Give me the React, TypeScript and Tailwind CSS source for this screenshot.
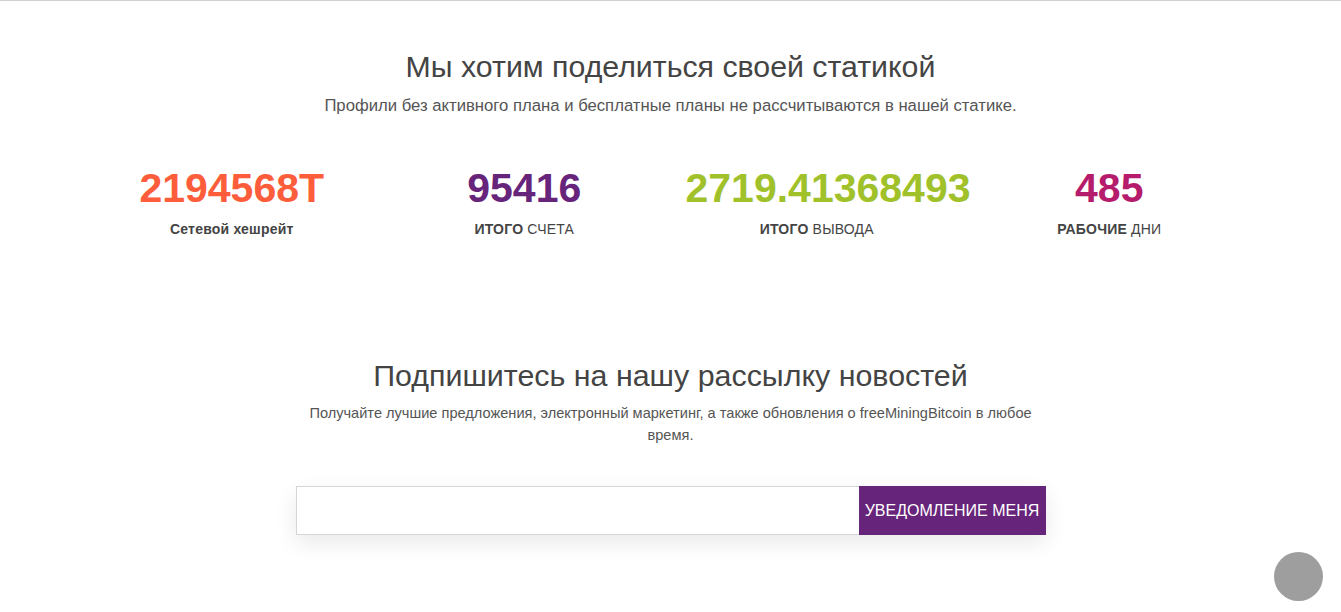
import React from "react";

const stats = [
  { value: "2194568T", color: "text-[#fd5d3b]", bold: "Сетевой хешрейт", rest: "" },
  { value: "95416", color: "text-[#66247a]", bold: "ИТОГО", rest: " СЧЕТА" },
  { value: "2719.41368493", color: "text-[#a1c12a]", bold: "ИТОГО", rest: " ВЫВОДА" },
  { value: "485", color: "text-[#b61c6c]", bold: "РАБОЧИЕ", rest: " ДНИ" },
];

export default function App() {
  return (
    <div className="min-h-[612px] bg-white border-t border-[#cfcfcf] font-['Liberation_Sans',Arial,sans-serif] text-[#444]">
      <section className="mx-auto w-[1170px] px-[15px] pt-[48px]">
        <h2 className="text-center text-[30.3px] leading-[36px] text-[#444]">Мы хотим поделиться своей статикой</h2>
        <p className="mt-[11px] text-center text-[16.7px] leading-[20px] text-[#555]">
          Профили без активного плана и бесплатные планы не рассчитываются в нашей статике.
        </p>
        <div className="mt-[49px] grid grid-cols-4 -mx-[15px]">
          {stats.map((s) => (
            <div key={s.value} className="px-[15px] text-center">
              <div className={`text-[41px] leading-[46px] font-bold whitespace-nowrap ${s.color}`}>{s.value}</div>
              <div className="mt-[9px] text-[14px] leading-[18px] tracking-[0.2px] text-[#444]">
                <span className="font-bold">{s.bold}</span>
                {s.rest}
              </div>
            </div>
          ))}
        </div>
      </section>

      <section className="mx-auto w-[780px] px-[15px] pt-[119px]">
        <h2 className="text-center text-[30.4px] leading-[36px] text-[#444]">Подпишитесь на нашу рассылку новостей</h2>
        <p className="mt-[9px] text-center text-[14.6px] leading-[22px] text-[#555]">
          Получайте лучшие предложения, электронный маркетинг, а также обновления о freeMiningBitcoin в любое время.
        </p>
        <form className="mt-[40px] flex h-[49px] shadow-[0_8px_22px_rgba(0,0,0,0.09)]" onSubmit={(e) => e.preventDefault()}>
          <input className="flex-1 h-full border border-[#d6d6d6] border-r-0 bg-white px-3 outline-none" />
          <button type="submit" className="w-[187px] h-full bg-[#66247a] text-white text-[16px]">
            УВЕДОМЛЕНИЕ МЕНЯ
          </button>
        </form>
      </section>

      <div className="fixed right-[18px] bottom-[11px] w-[49px] h-[49px] rounded-full bg-[#9e9e9e]" />
    </div>
  );
}
